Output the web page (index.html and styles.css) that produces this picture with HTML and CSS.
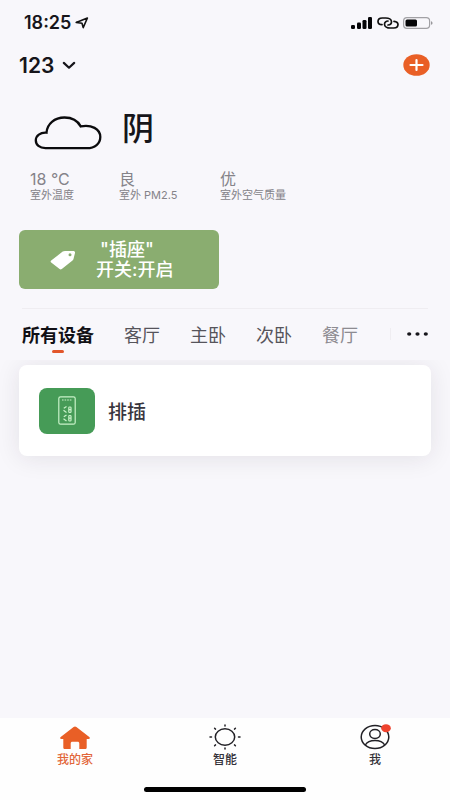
FILE: index.html
```html
<!DOCTYPE html>
<html lang="zh-CN">
<head>
<meta charset="utf-8">
<meta name="viewport" content="width=device-width, initial-scale=1">
<title>我的家</title>
<link rel="stylesheet" href="styles.css">
</head>
<body>
<div class="app">
  <div class="status">
    <span class="time">18:25</span>
    <svg width="14" height="12" viewBox="0 0 14 12" fill="none" stroke="#111" stroke-width="1.6" stroke-linejoin="round"><path d="M1.2 5.4 12.4 1 8.2 10.6 7 6.2Z"/></svg>
    <span class="signals">
      <svg width="22" height="12" viewBox="0 0 22 12" fill="#050507"><rect x="0" y="8" width="4" height="4" rx="1.3"/><rect x="6" y="5.5" width="4" height="6.5" rx="1.3"/><rect x="11.5" y="3" width="4" height="9" rx="1.3"/><rect x="17" y="0" width="4" height="12" rx="1.3"/></svg>
      <svg width="22" height="12" viewBox="0 0 22 12" fill="none" stroke="#111" stroke-width="1.7" stroke-linecap="round"><path d="M5 7.700C2.500 7.500 1 6 1 4.400 1 2.400 2.800 1 5.200 1h3.600c3 0 5.700 1.500 5.700 3.800 0 2-1.700 3.200-3.500 3.200"/><path d="M17 4.300c2.500.2 4 1.700 4 3.300 0 2-1.800 3.400-4.200 3.400h-3.600c-3 0-5.700-1.500-5.700-3.800 0-2 1.700-3.200 3.500-3.200"/></svg>
      <svg width="30" height="12" viewBox="0 0 30 12"><rect x=".6" y=".6" width="26" height="10.8" rx="3.3" fill="none" stroke="#a2a1a5" stroke-width="1.2"/><rect x="2.5" y="2.4" width="11.5" height="7.2" rx="1.5" fill="#050507"/><path d="M28 4.200c2 .4 2 3.200 0 3.600Z" fill="#98979b"/></svg>
    </span>
  </div>

  <header class="header">
    <button class="home-picker" type="button">123
      <svg width="14" height="9" viewBox="0 0 14 9" fill="none" stroke="#16151a" stroke-width="2.2" stroke-linecap="round" stroke-linejoin="round"><path d="M1.800 1.900 7 6.700l5.200-4.800"/></svg>
    </button>
    <button class="add" type="button" aria-label="添加">
      <svg width="27" height="22" viewBox="0 0 27 22"><ellipse cx="13.5" cy="11" rx="13.2" ry="10.8" fill="#e95f26"/><path d="M7.500 11h12M13.500 6v10" stroke="#fff" stroke-width="2.2" stroke-linecap="round"/></svg>
    </button>
  </header>

  <section class="weather">
    <div class="sky">
      <svg width="68" height="34" viewBox="0 0 68 34" fill="none" stroke="#0b0b0d" stroke-width="2.3"><path d="M11.500 32.200C5.500 32.200 1.800 28.900 1.800 24.300s4.500-8.100 10.700-7.600C13 8 20.500 1.500 30.500 1.500c7.300 0 13.200 3.300 16.200 8.900 10.700-2.200 19.600 2.600 19.600 10.600 0 6.600-5.400 11.200-13.400 11.200Z"/></svg>
      <h1>阴</h1>
    </div>
    <dl class="readings">
      <div><dd>18 °C</dd><dt>室外温度</dt></div>
      <div><dd>良</dd><dt>室外 PM2.5</dt></div>
      <div><dd>优</dd><dt>室外空气质量</dt></div>
    </dl>
  </section>

  <button class="scene" type="button">
    <svg width="26" height="20" viewBox="0 0 26 20"><path d="M1.200 10.500 12.700 1.600C13.300 1.100 14 .9 15 .9l8 .1c1.500 0 2.200.7 2 1.900L23.500 9c-.1.600-.5 1.100-1 1.500L11.800 19c-.8.600-1.500.6-2.200 0L1.200 12.400c-.8-.6-.8-1.300 0-1.900Z" fill="#fff"/><circle cx="20" cy="4.800" r="1.5" fill="#8aad70"/></svg>
    <span class="scene-text"><span class="scene-name">"插座"</span><span>开关:开启</span></span>
  </button>

  <nav class="rooms">
    <a class="active" href="#all">所有设备</a>
    <a href="#living">客厅</a>
    <a href="#master">主卧</a>
    <a href="#second">次卧</a>
    <a class="fading" href="#dining">餐厅</a>
    <button class="more" type="button" aria-label="更多">
      <svg width="21" height="4" viewBox="0 0 21 4" fill="#17161b"><ellipse cx="2.2" cy="2" rx="2.1" ry="1.7"/><ellipse cx="10.5" cy="2" rx="2.1" ry="1.7"/><ellipse cx="18.8" cy="2" rx="2.1" ry="1.7"/></svg>
    </button>
  </nav>

  <main class="devices">
    <a class="device" href="#strip">
      <span class="device-icon">
        <svg width="18" height="29" viewBox="0 0 18 29" fill="none" stroke="#c9f2c9" stroke-width="1.2"><rect x=".8" y=".8" width="16.4" height="27.4" rx="1.8"/><path d="M4 4h10" stroke-dasharray="1.6 1"/><path d="M8.500 10.500 5.800 12.300M5.500 14.200 8.500 16.500M8.500 19 5.800 20.800M5.500 22.700 8.500 25"/><rect x="10.800" y="11" width="2.200" height="5.500" rx=".8"/><path d="M11 13.700h2"/><rect x="10.800" y="19.500" width="2.200" height="5.500" rx=".8"/><path d="M11 22.200h2"/></svg>
      </span>
      排插
    </a>
  </main>

  <footer class="dock">
    <nav class="tabs">
      <a class="current" href="#home">
        <svg width="32" height="24" viewBox="0 0 32 24"><path d="M14.600 1.100c.9-.7 1.900-.7 2.800 0L30.300 11c1.100.9.700 2-.8 2h-1.800v8.500c0 1-.7 1.600-1.800 1.600h-5.600v-5.600c0-1.200-.6-1.800-1.800-1.800h-5c-1.200 0-1.800.6-1.800 1.800v5.600H6.100c-1.100 0-1.800-.6-1.800-1.600V13H2.500C1 13 .6 11.900 1.700 11Z" fill="#e95f26"/></svg>
        我的家
      </a>
      <a href="#smart">
        <svg width="32" height="26" viewBox="0 0 32 26" fill="none" stroke="#222126" stroke-width="1.5" stroke-linecap="round"><ellipse cx="16" cy="13" rx="9.7" ry="8.2"/><path d="M16 .9v1M16 24.100v1M1 13h1.500M29.500 13H31M5.600 4.300l.9.800M25.500 20.900l.9.800M26.400 4.300l-.9.800M6.500 20.900l-.9.800"/></svg>
        智能
      </a>
      <a href="#me">
        <svg width="32" height="26" viewBox="0 0 32 26" fill="none" stroke="#222126" stroke-width="1.5"><ellipse cx="16" cy="13" rx="13.8" ry="11.5"/><ellipse cx="16" cy="10" rx="5.3" ry="4.4"/><path d="M6.300 21c1.700-3 5.200-4.500 9.700-4.500s8 1.500 9.700 4.500"/><ellipse cx="27" cy="4.200" rx="4.8" ry="4" fill="#ee432e" stroke="none"/></svg>
        我
      </a>
    </nav>
    <div class="home-indicator"></div>
  </footer>
</div>
</body>
</html>
```
FILE: styles.css
```css
* {
  box-sizing: border-box;
}

body {
  margin: 0;
  background: #f8f7fb;
  color: #16151a;
  font-family: Inter, "Noto Sans CJK SC", sans-serif;
}

button {
  padding: 0;
  border: 0;
  background: none;
  color: inherit;
  font: inherit;
}

a {
  color: inherit;
  text-decoration: none;
}

svg {
  display: block;
  flex: none;
}

.app {
  display: flex;
  flex-direction: column;
  min-height: 100vh;
}

.status {
  display: flex;
  align-items: center;
  gap: 4px;
  height: 45px;
  padding: 0 17px 0 24px;
}

.time {
  font-size: 18px;
  font-weight: 600;
}

.signals {
  display: flex;
  gap: 4px;
  margin-left: auto;
}

.header {
  display: flex;
  align-items: center;
  justify-content: space-between;
  height: 40px;
  padding: 0 20px 0 19px;
}

.home-picker {
  display: flex;
  align-items: center;
  gap: 8px;
  font-size: 21px;
  font-weight: 600;
}

.weather {
  padding: 20px 30px 0;
}

.sky {
  display: flex;
  align-items: center;
  gap: 20px;
  height: 48px;
  padding-left: 4px;
}

.sky svg {
  margin-top: 7px;
}

.sky h1 {
  margin: 0;
  font-size: 32px;
  font-weight: 500;
  line-height: 44px;
}

.readings {
  display: grid;
  grid-template-columns: 89px 101px 1fr;
  margin: 17px 0 0;
  color: #858389;
}

.readings div {
  display: flex;
  flex-direction: column;
}

.readings dd {
  margin: 0;
  font-size: 16px;
  line-height: 19px;
}

.readings dt {
  font-size: 11px;
  line-height: 13px;
}

.scene {
  display: flex;
  align-items: center;
  align-self: flex-start;
  gap: 20px;
  width: 200px;
  height: 59px;
  margin: 28px 0 0 19px;
  padding-left: 31px;
  border-radius: 6px;
  background: #8aad70;
  color: #fff;
  font-size: 18px;
  font-weight: 500;
  line-height: 20px;
}

.scene-text {
  display: flex;
  flex-direction: column;
  align-items: flex-start;
}

.scene-name {
  padding-left: 4px;
}

.rooms {
  display: flex;
  align-items: center;
  gap: 30px;
  height: 51px;
  margin: 19px 22px 1px;
  border-top: 1px solid #efedf1;
  color: #56545b;
  font-size: 18px;
  white-space: nowrap;
}

.rooms .active {
  position: relative;
  color: #111015;
  font-weight: 700;
}

.rooms .active::after {
  position: absolute;
  bottom: -6px;
  left: 50%;
  width: 12px;
  height: 3px;
  margin-left: -6px;
  border-radius: 2px;
  background: #e2562b;
  content: "";
}

.rooms .fading {
  color: #8d8b91;
}

.more {
  margin-left: auto;
  padding: 4px 0 4px 16px;
  border-left: 1px solid #efedf1;
}

.devices {
  flex: 1;
  padding: 5px 19px;
  overflow: hidden;
}

.device {
  display: flex;
  align-items: center;
  gap: 13px;
  height: 91px;
  padding: 0 20px;
  border-radius: 8px;
  background: #fff;
  box-shadow: 0 2px 24px rgba(40, 30, 50, 0.1);
  color: #38363e;
  font-size: 19px;
  font-weight: 500;
}

.device-icon {
  display: grid;
  place-items: center;
  width: 56px;
  height: 46px;
  border-radius: 8px;
  background: #469b57;
}

.dock {
  height: 82px;
  padding-top: 6px;
  background: #fefefe;
}

.tabs {
  display: grid;
  grid-template-columns: repeat(3, 1fr);
}

.tabs a {
  display: flex;
  flex-direction: column;
  align-items: center;
  justify-content: flex-end;
  gap: 2px;
  height: 44px;
  color: #333138;
  font-size: 12px;
  font-weight: 500;
  line-height: 16px;
}

.tabs .current {
  color: #e2663a;
}

.home-indicator {
  width: 36%;
  height: 5px;
  margin: 19px auto 0;
  border-radius: 3px;
  background: #000;
}
```
